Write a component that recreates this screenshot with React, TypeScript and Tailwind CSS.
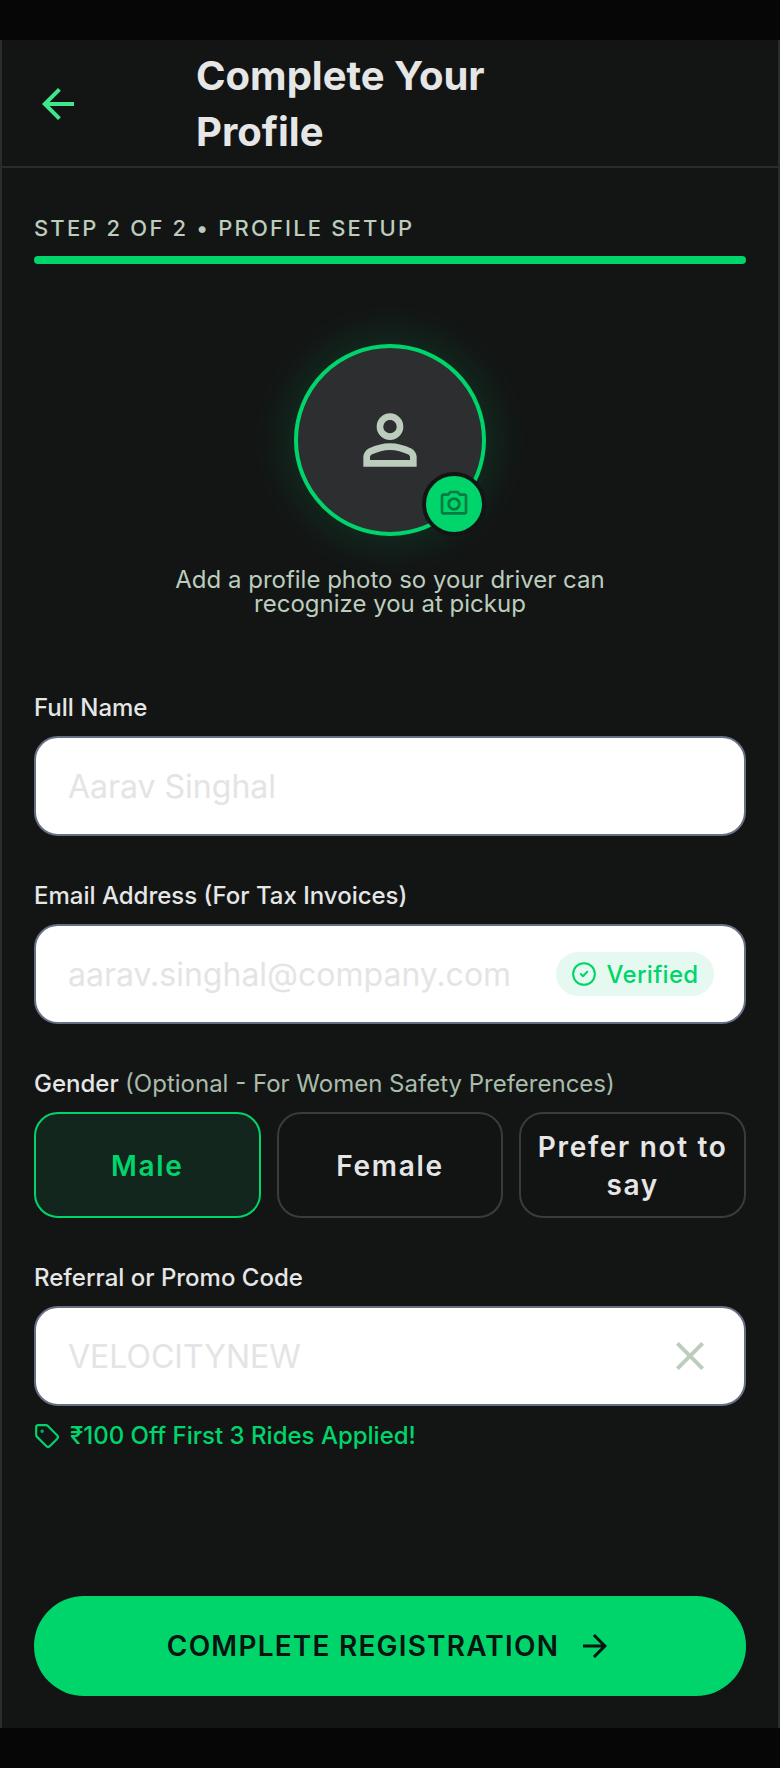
import { CircleCheck, Tag } from "lucide-react";

const font = { fontFamily: "Inter, 'Noto Sans', sans-serif" };

function Field({ placeholder, children }: { placeholder: string; children?: React.ReactNode }) {
  return (
    <div className="flex h-[100px] items-center rounded-[24px] border-2 border-[#667085] bg-white pl-[32px] pr-[30px]">
      <input
        readOnly
        placeholder={placeholder}
        className="min-w-0 flex-1 bg-transparent pt-[2px] text-[32px] outline-none placeholder:text-[#e4e4e5]"
      />
      {children}
    </div>
  );
}

export default function App() {
  return (
    <div style={font} className="flex h-[1768px] w-[780px] flex-col bg-[#060607] text-[#e6e6e6]">
      <div className="h-10 shrink-0" />

      <div className="flex min-h-0 flex-1 flex-col border-x-2 border-[#2a2c2c] bg-[#131515]">
        {/* Header */}
        <header className="flex h-[128px] shrink-0 items-center border-b-2 border-[#2a2c2c] px-8">
          <svg viewBox="0 0 24 24" className="mt-[2px] h-12 w-12 shrink-0 fill-[#3ee88a]">
            <path d="M20 11H7.83l5.59-5.59L12 4l-8 8 8 8 1.41-1.41L7.83 13H20v-2z" />
          </svg>
          <h1 className="ml-[114px] w-[340px] pt-[2px] text-[40px] leading-[56px] font-bold">Complete Your Profile</h1>
        </header>

        <div className="flex min-h-0 flex-1 flex-col px-8">
          {/* Progress */}
          <p className="mt-[44px] text-[22px] leading-[32px] font-medium tracking-[2.16px] text-[#bccdbe]">
            STEP 2 OF 2 • PROFILE SETUP
          </p>
          <div className="mt-[12px] h-2 rounded-full bg-[#00d56b]" />

          {/* Avatar */}
          <div className="mt-[80px] flex flex-col items-center">
            <div className="relative flex h-[192px] w-[192px] items-center justify-center rounded-full border-4 border-[#00d56b] bg-[#2c2e30] shadow-[0_0_48px_rgba(0,213,107,0.2)]">
              <svg viewBox="0 0 24 24" className="h-20 w-20 fill-[#bccdbe]">
                <path d="M12 12c-1.1 0-2.04-.39-2.83-1.18C8.39 10.04 8 9.1 8 8s.39-2.04 1.17-2.83C9.96 4.39 10.9 4 12 4s2.04.39 2.83 1.17C15.61 5.96 16 6.9 16 8s-.39 2.04-1.17 2.82C14.04 11.61 13.1 12 12 12Zm0-2c.55 0 1.02-.2 1.41-.59.39-.39.59-.86.59-1.41s-.2-1.02-.59-1.41C13.02 6.2 12.55 6 12 6s-1.02.2-1.41.59C10.2 6.98 10 7.45 10 8s.2 1.02.59 1.41c.39.39.86.59 1.41.59Z" />
                <path d="M4 20v-2.8c0-.57.15-1.09.44-1.56.29-.47.68-.83 1.16-1.09 1.03-.52 2.08-.9 3.15-1.16C9.82 13.13 10.9 13 12 13s2.18.13 3.25.39c1.07.26 2.12.64 3.15 1.16.48.26.87.62 1.16 1.09.29.47.44.99.44 1.56V20H4Zm2-2h12v-.8c0-.19-.05-.35-.14-.5a.97.97 0 0 0-.36-.35c-.9-.45-1.81-.78-2.73-1.01C13.85 15.11 12.93 15 12 15s-1.85.11-2.77.34c-.92.23-1.83.56-2.73 1.01-.15.09-.27.2-.36.35-.09.15-.14.31-.14.5v.8Z" />
              </svg>
              <div className="absolute right-[-4px] bottom-[-4px] flex h-16 w-16 items-center justify-center rounded-full border-4 border-[#131515] bg-[#00d56b]">
                <svg viewBox="0 0 24 24" className="h-8 w-8 fill-[#0a7a43]">
                  <path d="M14.12 4l1.83 2H20v12H4V6h4.05l1.83-2h4.24M15 2H9L7.17 4H4c-1.1 0-2 .9-2 2v12c0 1.1.9 2 2 2h16c1.1 0 2-.9 2-2V6c0-1.1-.9-2-2-2h-3.17L15 2zm-3 7c1.65 0 3 1.35 3 3s-1.35 3-3 3-3-1.35-3-3 1.35-3 3-3m0-2c-2.76 0-5 2.24-5 5s2.24 5 5 5 5-2.24 5-5-2.24-5-5-5z" />
                </svg>
              </div>
            </div>
            <p className="mt-[32px] text-center text-[24px] leading-[24px] text-[#bccdbe]">
              Add a profile photo so your driver can
              <br />
              recognize you at pickup
            </p>
          </div>

          {/* Form */}
          <label className="mt-[76px] mb-[12px] text-[24px] leading-[32px] font-medium">Full Name</label>
          <Field placeholder="Aarav Singhal" />

          <label className="mt-[44px] mb-[12px] text-[24px] leading-[32px] font-medium">
            Email Address (For Tax Invoices)
          </label>
          <Field placeholder="aarav.singhal@company.com">
            <span className="flex h-11 w-[158px] shrink-0 items-center justify-center gap-[9px] rounded-full bg-[#e6f9f0] text-[24px] font-medium tracking-[0.3px] text-[#00d56b]">
              <CircleCheck className="h-[26px] w-[26px]" strokeWidth={1.9} />
              <span className="pt-[2px]">Verified</span>
            </span>
          </Field>

          <p className="mt-[44px] mb-[12px] text-[24px] leading-[32px] font-medium">
            Gender <span className="font-normal text-[#a9bcab]">(Optional - For Women Safety Preferences)</span>
          </p>
          <div className="grid grid-cols-3 gap-4">
            <button className="h-[106px] rounded-[24px] border-2 border-[#00d56b] bg-[#12261e] pt-[2px] text-[28px] font-semibold tracking-[1.7px] text-[#00d56b]">
              Male
            </button>
            <button className="h-[106px] rounded-[24px] border-2 border-[#3a3b3c] bg-[#121414] pt-[2px] text-[28px] font-semibold tracking-[1.7px]">
              Female
            </button>
            <button className="h-[106px] rounded-[24px] border-2 border-[#3a3b3c] bg-[#121414] px-2 pt-[2px] text-[28px] leading-[38px] font-semibold tracking-[1.7px]">
              Prefer not to say
            </button>
          </div>

          <label className="mt-[44px] mb-[12px] text-[24px] leading-[32px] font-medium">Referral or Promo Code</label>
          <Field placeholder="VELOCITYNEW">
            <svg viewBox="0 0 24 24" className="h-12 w-12 shrink-0 fill-[#bccdbe]">
              <path d="M19 6.41 17.59 5 12 10.59 6.41 5 5 6.41 10.59 12 5 17.59 6.41 19 12 13.41 17.59 19 19 17.59 13.41 12z" />
            </svg>
          </Field>
          <p className="mt-[14px] flex items-center gap-[10px] text-[24px] leading-[32px] font-medium text-[#00d56b]">
            <Tag className="h-[26px] w-[26px]" />
            ₹100 Off First 3 Rides Applied!
          </p>

          {/* Submit */}
          <button className="mt-auto mb-8 flex h-[100px] shrink-0 items-center justify-center gap-[18px] rounded-full bg-[#00d56b] text-[28px] font-semibold tracking-[1.2px] text-[#0b1410]">
            COMPLETE REGISTRATION
            <svg viewBox="0 0 24 24" className="h-9 w-9 fill-[#0b1410]">
              <path d="M12 4l-1.41 1.41L16.17 11H4v2h12.17l-5.58 5.59L12 20l8-8z" />
            </svg>
          </button>
        </div>
      </div>

      <div className="h-10 shrink-0" />
    </div>
  );
}
